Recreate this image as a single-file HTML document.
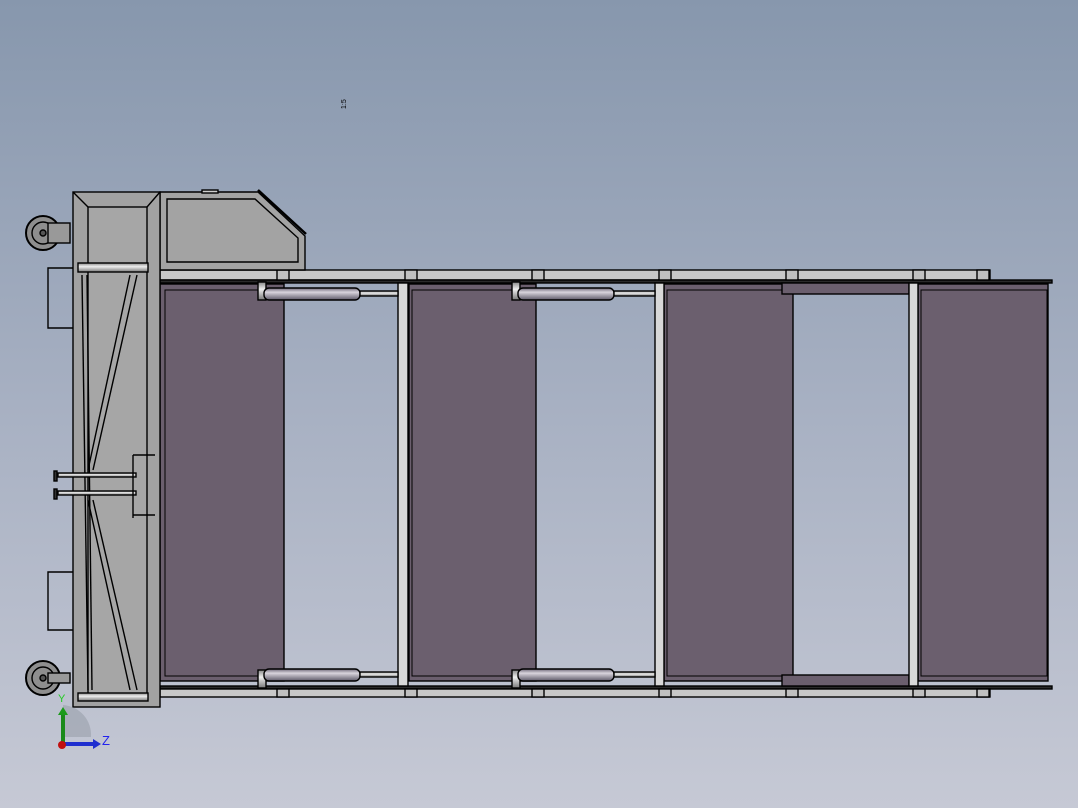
<!DOCTYPE html>
<html><head><meta charset="utf-8"><style>
html,body{margin:0;padding:0}
body{width:1078px;height:808px;overflow:hidden;background:linear-gradient(#8797ad,#a7b0c2 50%,#c6c9d5);}
svg{position:absolute;left:0;top:0}
</style></head><body>
<svg width="1078" height="808" viewBox="0 0 1078 808">
<defs>
<linearGradient id="cyl" x1="0" y1="0" x2="0" y2="1"><stop offset="0" stop-color="#6e6878"/><stop offset=".35" stop-color="#d8d4dc"/><stop offset="1" stop-color="#5d5868"/></linearGradient>
<linearGradient id="rod" x1="0" y1="0" x2="0" y2="1"><stop offset="0" stop-color="#888"/><stop offset=".4" stop-color="#eee"/><stop offset="1" stop-color="#777"/></linearGradient>
</defs>
<g stroke="#000" stroke-width="1.4">
<rect x="160" y="270" width="830" height="10" fill="#c8c8c8"/>
<rect x="160" y="280" width="892" height="3" fill="#2a2a2a"/>
<rect x="160" y="686" width="892" height="3" fill="#2a2a2a"/>
<rect x="160" y="689" width="830" height="8" fill="#c8c8c8"/>
<g fill="#6b5f6e">
<rect x="160" y="284" width="124" height="397"/><rect x="165" y="290" width="119" height="386" fill="none" stroke-width="1"/>
<rect x="409" y="284" width="127" height="397"/><rect x="412" y="290" width="124" height="386" fill="none" stroke-width="1"/>
<rect x="664" y="284" width="129" height="397"/><rect x="667" y="290" width="126" height="386" fill="none" stroke-width="1"/>
<rect x="918" y="284" width="130" height="397"/><rect x="921" y="290" width="126" height="386" fill="none" stroke-width="1"/>
<rect x="782" y="283" width="127" height="11"/>
<rect x="782" y="675" width="127" height="11"/>
</g>
<rect x="398" y="283" width="10" height="403" fill="#d8d8d8"/>
<rect x="655" y="283" width="9" height="403" fill="#d8d8d8"/>
<rect x="909" y="283" width="9" height="403" fill="#d8d8d8"/>
<g fill="#c0c0c0">
<rect x="277" y="270" width="12" height="10"/><rect x="405" y="270" width="12" height="10"/><rect x="532" y="270" width="12" height="10"/><rect x="659" y="270" width="12" height="10"/><rect x="786" y="270" width="12" height="10"/><rect x="913" y="270" width="12" height="10"/><rect x="977" y="270" width="12" height="10"/>
<rect x="277" y="689" width="12" height="8"/><rect x="405" y="689" width="12" height="8"/><rect x="532" y="689" width="12" height="8"/><rect x="659" y="689" width="12" height="8"/><rect x="786" y="689" width="12" height="8"/><rect x="913" y="689" width="12" height="8"/><rect x="977" y="689" width="12" height="8"/>
</g>
<g>
<rect x="258" y="282" width="8" height="18" fill="url(#rod)"/><rect x="264" y="288" width="96" height="12" rx="5" fill="url(#cyl)"/><rect x="360" y="291" width="38" height="5" fill="url(#rod)"/>
<rect x="512" y="282" width="8" height="18" fill="url(#rod)"/><rect x="518" y="288" width="96" height="12" rx="5" fill="url(#cyl)"/><rect x="614" y="291" width="41" height="5" fill="url(#rod)"/>
<rect x="258" y="670" width="8" height="18" fill="url(#rod)"/><rect x="264" y="669" width="96" height="12" rx="5" fill="url(#cyl)"/><rect x="360" y="672" width="38" height="5" fill="url(#rod)"/>
<rect x="512" y="670" width="8" height="18" fill="url(#rod)"/><rect x="518" y="669" width="96" height="12" rx="5" fill="url(#cyl)"/><rect x="614" y="672" width="41" height="5" fill="url(#rod)"/>
</g>
<path d="M160 192 H258 L305 236 V270 H160 Z" fill="#a3a3a3"/>
<path d="M167 199 H255 L298 238 V262 H167 Z" fill="none"/>
<line x1="258" y1="190" x2="306" y2="234" stroke-width="2.5"/>
<rect x="202" y="190" width="16" height="3" fill="#ccc"/>
<rect x="73" y="192" width="87" height="515" fill="#a2a2a2"/>
<rect x="88" y="207" width="59" height="490" fill="#a6a6a6"/>
<line x1="73" y1="192" x2="88" y2="207"/><line x1="160" y1="192" x2="147" y2="207"/>
<line x1="82" y1="275" x2="88" y2="690"/><line x1="87" y1="275" x2="92" y2="690"/>
<line x1="130" y1="275" x2="88" y2="470"/><line x1="137" y1="275" x2="93" y2="470"/>
<line x1="88" y1="500" x2="130" y2="690"/><line x1="93" y1="500" x2="137" y2="690"/>
<rect x="78" y="263" width="70" height="9" fill="url(#rod)"/>
<rect x="78" y="693" width="70" height="8" fill="url(#rod)"/>
<path d="M73 268 H48 V328 H73" fill="none"/>
<path d="M73 572 H48 V630 H73" fill="none"/>
<rect x="58" y="473" width="78" height="4" fill="url(#rod)"/><rect x="58" y="491" width="78" height="4" fill="url(#rod)"/>
<rect x="54" y="471" width="3" height="10" fill="#333"/><rect x="54" y="489" width="3" height="10" fill="#333"/>
<path d="M133 455 V518 M133 455 H155 M133 515 H155" fill="none"/>
<circle cx="43" cy="233" r="17" fill="#8e8e8e" stroke-width="2"/><circle cx="43" cy="233" r="11" fill="none"/><circle cx="43" cy="233" r="3" fill="#555"/>
<rect x="48" y="223" width="22" height="20" fill="#999"/>
<circle cx="43" cy="678" r="17" fill="#8e8e8e" stroke-width="2"/><circle cx="43" cy="678" r="11" fill="none"/><circle cx="43" cy="678" r="3" fill="#555"/>
<rect x="48" y="673" width="22" height="10" fill="#999"/>
</g>
<path d="M63 705 A 30 30 0 0 1 91 737 H63 Z" fill="#9aa0aa" opacity=".6"/>
<line x1="63" y1="745" x2="63" y2="714" stroke="#1a8a1a" stroke-width="4"/>
<polygon points="58,715 68,715 63,707" fill="#1a9a1a"/>
<line x1="63" y1="744" x2="94" y2="744" stroke="#1f2fcf" stroke-width="4"/>
<polygon points="93,739 93,749 101,744" fill="#1f2fcf"/>
<circle cx="62" cy="745" r="4" fill="#c01010"/>
<text x="58" y="702" font-family="Liberation Sans,sans-serif" font-size="11" fill="#2c2">Y</text>
<text x="102" y="745" font-family="Liberation Sans,sans-serif" font-size="13" fill="#22e">Z</text>
<text x="0" y="0" transform="translate(346,109) rotate(-90)" font-family="Liberation Sans,sans-serif" font-size="7" fill="#000">1:5</text>
</svg>
</body></html>
